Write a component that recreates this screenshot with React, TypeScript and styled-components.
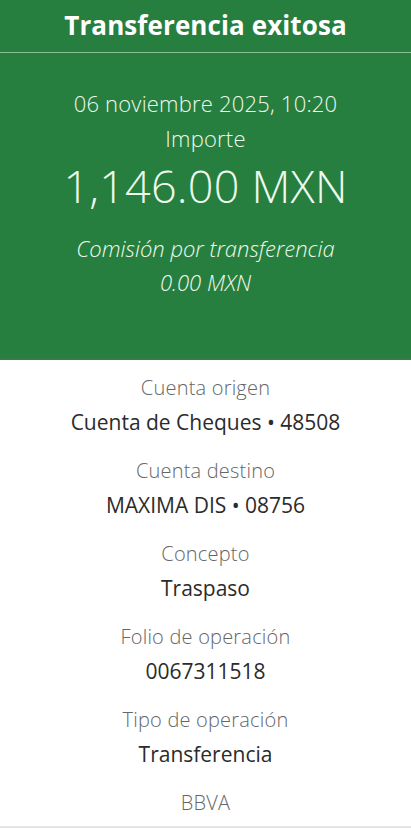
import React from 'react';
import styled, { createGlobalStyle } from 'styled-components';

const Global = createGlobalStyle`
  html, body {
    margin: 0;
    padding: 0;
    background: #ffffff;
  }
  body {
    font-family: 'Open Sans', 'Liberation Sans', sans-serif;
    -webkit-font-smoothing: antialiased;
  }
`;

const Screen = styled.div`
  width: 411px;
  height: 828px;
  overflow: hidden;
  display: flex;
  flex-direction: column;
  background: #ffffff;
  border-bottom: 2px solid #e6e6e6;
  box-sizing: border-box;
`;

const Hero = styled.section`
  background: #277f3f;
  color: #ffffff;
  height: 360px;
  display: flex;
  flex-direction: column;
  align-items: center;
  border-bottom: 2px solid #3a7a48;
  box-sizing: border-box;
`;

const Title = styled.h1`
  margin: 0;
  width: 100%;
  height: 53px;
  display: flex;
  align-items: center;
  justify-content: center;
  font-size: 26px;
  font-weight: 700;
  letter-spacing: 0.1px;
  border-bottom: 1px solid rgba(220, 245, 225, 0.55);
  box-sizing: border-box;
  padding-bottom: 2px;
`;

const Line = styled.div<{ $size?: number; $lh?: number; $italic?: boolean; $mt?: number }>`
  font-size: ${p => p.$size || 22}px;
  font-weight: 300;
  font-style: ${p => (p.$italic ? 'italic' : 'normal')};
  line-height: ${p => p.$lh || 26}px;
  margin-top: ${p => p.$mt || 0}px;
  letter-spacing: ${p => (p.$italic ? 0 : 0.2)}px;
  color: #eefaee;
  text-align: center;
  white-space: nowrap;
`;

const Details = styled.section`
  display: flex;
  flex-direction: column;
  align-items: center;
  padding-top: 16px;
`;

const Field = styled.div`
  display: flex;
  flex-direction: column;
  align-items: center;
  height: 83px;
`;

const Label = styled.div`
  font-size: 20px;
  font-weight: 300;
  color: #666666;
  line-height: 24px;
  letter-spacing: 0.2px;
`;

const Value = styled.div`
  font-size: 21px;
  font-weight: 400;
  color: #2b2b2b;
  line-height: 24px;
  margin-top: 10px;
`;

const fields = [
  { label: 'Cuenta origen', value: 'Cuenta de Cheques • 48508' },
  { label: 'Cuenta destino', value: 'MAXIMA DIS • 08756' },
  { label: 'Concepto', value: 'Traspaso' },
  { label: 'Folio de operación', value: '0067311518' },
  { label: 'Tipo de operación', value: 'Transferencia' },
];

export default function App() {
  return (
    <>
      <Global />
      <Screen>
        <Hero>
          <Title>Transferencia exitosa</Title>
          <Line $mt={37}>06 noviembre 2025, 10:20</Line>
          <Line $mt={9}>Importe</Line>
          <Line $size={45} $lh={56} $mt={7}>1,146.00 MXN</Line>
          <Line $italic $mt={21}>Comisión por transferencia</Line>
          <Line $italic $mt={8}>0.00 MXN</Line>
        </Hero>
        <Details>
          {fields.map(f => (
            <Field key={f.label}>
              <Label>{f.label}</Label>
              <Value>{f.value}</Value>
            </Field>
          ))}
          <Label>BBVA</Label>
        </Details>
      </Screen>
    </>
  );
}
